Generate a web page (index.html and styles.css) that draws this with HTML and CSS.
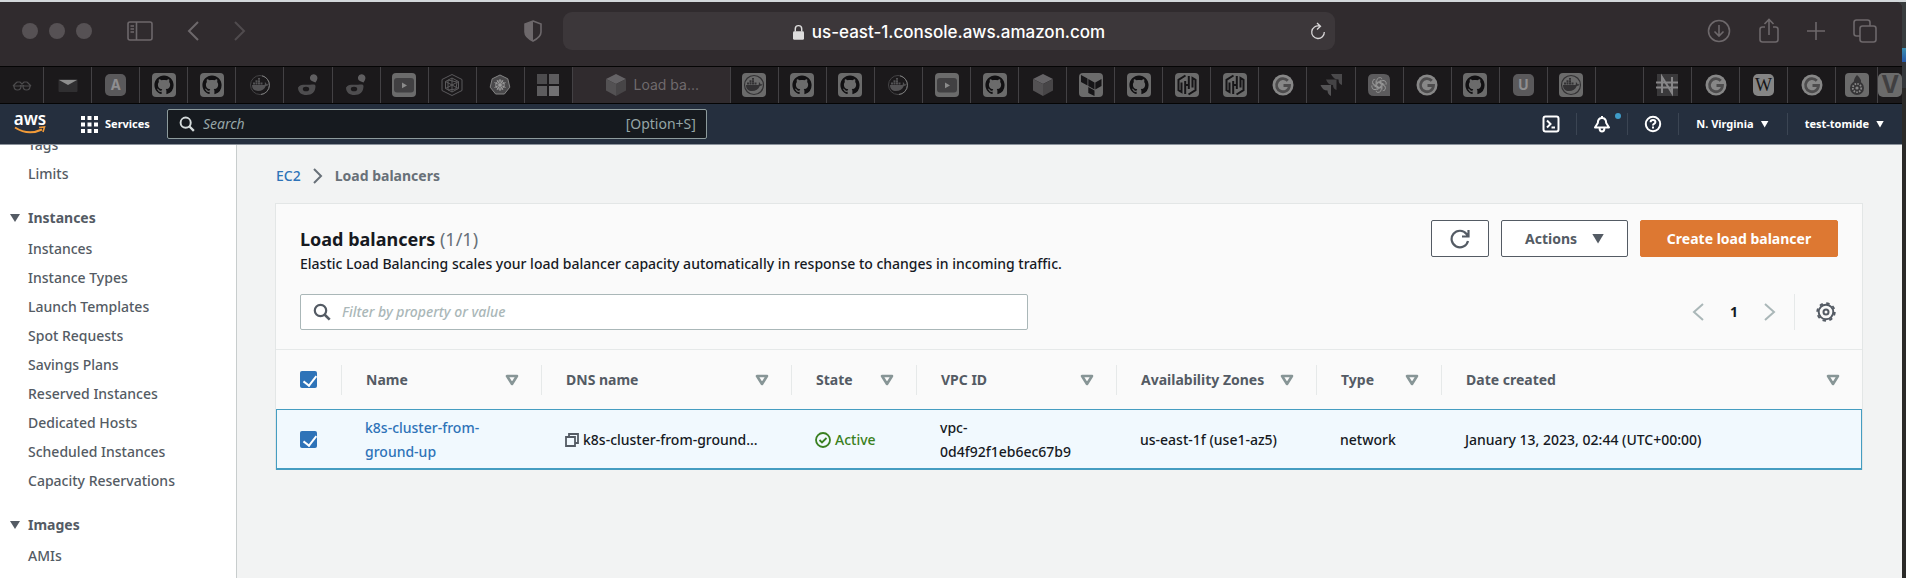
FILE: index.html
```html
<!DOCTYPE html>
<html lang="en">
<head>
<meta charset="utf-8">
<title>Load balancers | EC2</title>
<link rel="stylesheet" href="styles.css">
</head>
<body>
<svg class="sprite" aria-hidden="true">
  <symbol id="github" viewBox="0 0 24 24"><rect width="24" height="24" rx="4" fill="#6b6b6b"/><path transform="translate(2.4 2.4) scale(1.2)" fill="#111012" d="M8 0C3.58 0 0 3.58 0 8c0 3.54 2.29 6.53 5.47 7.59.4.07.55-.17.55-.38 0-.19-.01-.82-.01-1.49-2.01.37-2.53-.49-2.69-.94-.09-.23-.48-.94-.82-1.13-.28-.15-.68-.52-.01-.53.63-.01 1.08.58 1.23.82.72 1.21 1.87.87 2.33.66.07-.52.28-.87.51-1.07-1.78-.2-3.64-.89-3.64-3.95 0-.87.31-1.59.82-2.15-.08-.2-.36-1.02.08-2.12 0 0 .67-.21 2.2.82.64-.18 1.32-.27 2-.27.68 0 1.36.09 2 .27 1.53-1.04 2.2-.82 2.2-.82.44 1.1.16 1.92.08 2.12.51.56.82 1.27.82 2.15 0 3.07-1.87 3.75-3.65 3.95.29.25.54.73.54 1.48 0 1.07-.01 1.93-.01 2.2 0 .21.15.46.55.38A8.01 8.01 0 0 0 16 8c0-4.42-3.58-8-8-8z"/></symbol>
  <symbol id="whale" viewBox="0 0 24 24"><path d="M4 12h12.500c.6-1 .4-2 .3-2.800 1 .4 1.600 1.200 1.700 2 .7-.1 1.500 0 2 .4-.5 1-1.500 1.400-2.700 1.400C16.400 16.500 13.800 18 10 18c-3.500 0-6-1.700-6-6zM5 9.500h2v2H5zM7.500 9.500h2v2h-2zM10 9.500h2v2h-2zM12.500 9.500h2v2h-2zM7.500 7.200h2v2h-2zM10 7.200h2v2h-2zM10 5h2v1.800h-2z"/></symbol>
  <symbol id="docker" viewBox="0 0 24 24"><circle cx="12" cy="12" r="9.500" fill="none" stroke="#444345" stroke-width="1"/><path d="M14 2.800a9.500 9.500 0 0 1-1 18.700" fill="none" stroke="#7b7b7b" stroke-width="1"/><use href="#whale" fill="#535254"/></symbol>
  <symbol id="dockerbox" viewBox="0 0 24 24"><rect width="24" height="24" rx="4" fill="#6b6b6b"/><circle cx="12" cy="12" r="9.500" fill="none" stroke="#333234" stroke-width="1.200"/><use href="#whale" fill="#333234"/></symbol>
  <symbol id="dtail" viewBox="0 0 24 24"><path d="M2 14.500c1-.2 1-2.500 5-2.700 3-.2 5 .2 7 0 3-.3 5-1 5.500 1.200C19.500 19 16 22 10.500 22 5.500 22 2 19.500 2 14.500z" fill="#4e4d4f"/><ellipse cx="10" cy="16" rx="3.200" ry="2.300" fill="#1b191b"/><path d="M14 4q1-3.500 5-2.500 3.500 1.500 2 5.500l-1.500 2.500-2.500-1q-3.500-1-3-4.500z" fill="#605f61"/></symbol>
  <symbol id="youtube" viewBox="0 0 24 24"><rect width="24" height="24" rx="4" fill="#6b6b6b"/><rect x="2" y="5" width="20" height="14.500" rx="3" fill="#414042"/><path d="M10 9.500l5 2.900-5 2.900z" fill="#8b8b8b"/></symbol>
  <symbol id="cube" viewBox="0 0 24 24"><path d="M12 1l10 5-10 5L2 6z" fill="#656366"/><path d="M2 6l10 5v12L2 17.500z" fill="#535153"/><path d="M22 6l-10 5v12l10-5.500z" fill="#474547"/></symbol>
  <symbol id="hashi" viewBox="0 0 24 24"><rect width="24" height="24" rx="4" fill="#6b6b6b"/><path d="M10.500 2.500L3.500 6.800v10.400l3 1.800V9.500M13.500 21.500l7-4.300V6.800l-3-1.800v9.500M10.200 8v13M13.800 3v13M10.200 12h3.600" fill="none" stroke="#161517" stroke-width="2"/></symbol>
  <symbol id="google" viewBox="0 0 24 24"><circle cx="12" cy="12" r="10.500" fill="#878787"/><path d="M16.800 7.800A6.500 6.500 0 1 0 18.500 12.500H12.500" fill="none" stroke="#4d4c4d" stroke-width="2.800"/></symbol>
  <symbol id="terraform" viewBox="0 0 24 24"><rect width="24" height="24" rx="4" fill="#6b6b6b"/><path d="M2 2l6.500 3.500v7L2 9zM9.300 6l6.200 3.500v7L9.300 13zM16.300 9.500L22.500 6v7l-6.200 3.500zM9.300 14l6.200 3.500v5.500L9.300 20z" fill="#161517"/></symbol>
  <symbol id="sort" viewBox="0 0 14 12"><path d="M2 2h10l-5 8z" fill="none" stroke="#879596" stroke-width="2.600" stroke-linejoin="round"/></symbol>
  <symbol id="search" viewBox="0 0 18 18"><circle cx="7.500" cy="7.500" r="5.700" fill="none" stroke="currentColor" stroke-width="2.200"/><path d="M11.500 11.500l5.200 5.200" stroke="currentColor" stroke-width="2.600"/></symbol>
</svg>

<div class="desktop">
<div class="window">
  <header class="toolbar">
    <div class="tools">
      <span class="lights"><i></i><i></i><i></i></span>
      <button class="tool tool-side" aria-label="Sidebar"><svg width="26" height="20" viewBox="0 0 26 20" fill="none" stroke="currentColor" stroke-width="1.600"><rect x="1" y="1" width="24" height="18" rx="2"/><path d="M9.500 1v18M3.500 5h3.500M3.500 8h3.500M3.500 11h3.500"/></svg></button>
      <button class="tool tool-back" aria-label="Back"><svg width="12" height="20" viewBox="0 0 12 20" fill="none" stroke="currentColor" stroke-width="2"><path d="M11 1L2 10l9 9"/></svg></button>
      <button class="tool dim" aria-label="Forward"><svg width="12" height="20" viewBox="0 0 12 20" fill="none" stroke="currentColor" stroke-width="2"><path d="M1 1l9 9-9 9"/></svg></button>
      <button class="tool tool-shield" aria-label="Privacy report"><svg width="20" height="22" viewBox="0 0 20 22"><path d="M10 1l8 3v8c0 4-3 6.500-8 9-5-2.500-8-5-8-9V4z" fill="none" stroke="currentColor" stroke-width="1.600"/><path d="M10 1L2 4v8c0 4 3 6.500 8 9z" fill="currentColor"/></svg></button>
    </div>
    <div class="address">
      <svg width="11" height="17" viewBox="0 0 12 18"><rect y="7.500" width="12" height="9.500" rx="1.500" fill="#dedddd"/><path d="M2.500 8V5a3.500 3.500 0 0 1 7 0v3" fill="none" stroke="#dedddd" stroke-width="1.600"/></svg>
      <span>us-east-1.console.aws.amazon.com</span>
      <button class="reload" aria-label="Reload"><svg width="16" height="18" viewBox="0 0 16 18" fill="none" stroke="currentColor" stroke-width="1.300"><path d="M9.500 4.100A6.300 6.300 0 1 0 14.300 10M7 1l3.500 3.300L7 7.500"/></svg></button>
    </div>
    <div class="tools tools-end">
      <button class="tool" aria-label="Downloads"><svg width="24" height="24" viewBox="0 0 24 24" fill="none" stroke="currentColor" stroke-width="1.600"><circle cx="12" cy="12" r="10.500"/><path d="M12 6v11M7.500 12.500L12 17l4.500-4.500"/></svg></button>
      <button class="tool" aria-label="Share"><svg width="20" height="26" viewBox="0 0 20 26" fill="none" stroke="currentColor" stroke-width="1.600"><path d="M6 9H3.500Q1 9 1 11.500v10Q1 24 3.500 24h13q2.500 0 2.500-2.500v-10Q19 9 16.500 9H14M10 17V1.500M5.500 6L10 1.500 14.500 6"/></svg></button>
      <button class="tool" aria-label="New tab"><svg width="18" height="18" viewBox="0 0 18 18" stroke="currentColor" stroke-width="1.600"><path d="M9 0v18M0 9h18"/></svg></button>
      <button class="tool" aria-label="Tab overview"><svg width="24" height="24" viewBox="0 0 24 24" fill="none" stroke="currentColor" stroke-width="1.600"><rect x="7" y="7" width="16" height="16" rx="2.500"/><path d="M7 17H3.500Q1 17 1 14.500v-11Q1 1 3.500 1h11Q17 1 17 3.500V7"/></svg></button>
    </div>
  </header>

  <nav class="tabs" aria-label="Tabs">
    <a href="#" class="tab tab-first" aria-label="Tab"><svg viewBox="0 0 24 24" fill="none" stroke="#4c4b4d" stroke-width="1.200"><path d="M7 9h3l4 4M17 9h-3l-4 4M3 13h18M7 9l-4 4M17 9l4 4M4 13q0 4 3.500 4t3.500-4M13 13q0 4 3.500 4t3.500-4"/></svg></a>
    <a href="#" class="tab" aria-label="Mail"><svg viewBox="0 0 24 24"><rect x="2.500" y="6" width="19" height="13" rx="1" fill="#302f31"/><path d="M3 7h18l-9 5z" fill="#8e8e8e"/></svg></a>
    <a href="#" class="tab"><span class="letter">A</span></a>
    <a href="#" class="tab" aria-label="GitHub"><svg><use href="#github"/></svg></a>
    <a href="#" class="tab" aria-label="GitHub"><svg><use href="#github"/></svg></a>
    <a href="#" class="tab" aria-label="Docker"><svg><use href="#docker"/></svg></a>
    <a href="#" class="tab" aria-label="Tab"><svg><use href="#dtail"/></svg></a>
    <a href="#" class="tab" aria-label="Tab"><svg><use href="#dtail"/></svg></a>
    <a href="#" class="tab" aria-label="YouTube"><svg><use href="#youtube"/></svg></a>
    <a href="#" class="tab" aria-label="Tab"><svg viewBox="0 0 24 24" fill="none" stroke="#5b5a5c" stroke-width="1"><path d="M12 1.500l10 5v11l-10 5-10-5v-11zM12 5l6.500 3.500v7L12 19l-6.500-3.500v-7zM12 5v14M5.500 8.500l13 7M18.500 8.500l-13 7M8 7l9 2-1 7-8 1z"/></svg></a>
    <a href="#" class="tab" aria-label="Kubernetes"><svg viewBox="0 0 24 24"><path d="M12 2l7.800 3.800 2 8.400-5.400 6.800H7.600l-5.400-6.800 2-8.400z" fill="#4a494b" stroke="#858585" stroke-width="1"/><g fill="none" stroke="#a0a0a0" stroke-width=".9"><circle cx="12" cy="12" r="4.200"/><path d="M12 6v12M6.500 9.500l11 5M6.500 14.500l11-5M9 7l6 10M15 7l-6 10"/></g></svg></a>
    <a href="#" class="tab" aria-label="Microsoft"><svg viewBox="0 0 24 24"><path d="M1 1h10v10H1z" fill="#4d4c4e"/><path d="M13 1h10v10H13zM1 13h10v10H1z" fill="#5d5c5e"/><path d="M13 13h10v10H13z" fill="#727173"/></svg></a>
    <a href="#" class="tab tab-active" aria-current="page"><svg><use href="#cube"/></svg><span>Load ba...</span></a>
    <a href="#" class="tab" aria-label="Docker"><svg><use href="#dockerbox"/></svg></a>
    <a href="#" class="tab" aria-label="GitHub"><svg><use href="#github"/></svg></a>
    <a href="#" class="tab" aria-label="GitHub"><svg><use href="#github"/></svg></a>
    <a href="#" class="tab" aria-label="Docker"><svg><use href="#docker"/></svg></a>
    <a href="#" class="tab" aria-label="YouTube"><svg><use href="#youtube"/></svg></a>
    <a href="#" class="tab" aria-label="GitHub"><svg><use href="#github"/></svg></a>
    <a href="#" class="tab" aria-label="AWS"><svg><use href="#cube"/></svg></a>
    <a href="#" class="tab" aria-label="Terraform"><svg><use href="#terraform"/></svg></a>
    <a href="#" class="tab" aria-label="GitHub"><svg><use href="#github"/></svg></a>
    <a href="#" class="tab" aria-label="HashiCorp"><svg><use href="#hashi"/></svg></a>
    <a href="#" class="tab" aria-label="HashiCorp"><svg><use href="#hashi"/></svg></a>
    <a href="#" class="tab" aria-label="Google"><svg><use href="#google"/></svg></a>
    <a href="#" class="tab" aria-label="Jira"><svg viewBox="0 0 24 24"><path d="M12 1h11v11q-3.500-1-3.500-5.500-5 0-7.500-5.500z" fill="#4a494b"/><path d="M7 6.500h10.500v10.500q-3.500-1-3.500-5-5 0-7-5.500z" fill="#444345"/><path d="M1.500 12H12v11q-3.500-2-3.500-5.500-5 0-7-5.500z" fill="#555456"/></svg></a>
    <a href="#" class="tab" aria-label="OpenAI"><svg viewBox="0 0 24 24"><path d="M6 1h11q6 0 6 6v16H7q-6 0-6-6V6q0-5 5-5z" fill="#5c5b5d"/><g fill="none" stroke="#9a9a9a" stroke-width=".9"><path id="petal" d="M9.800 13.200V7.600a3 3 0 0 1 5.400-1.800M9.800 9.800l4.600-2.600"/><use href="#petal" transform="rotate(60 12 12)"/><use href="#petal" transform="rotate(120 12 12)"/><use href="#petal" transform="rotate(180 12 12)"/><use href="#petal" transform="rotate(240 12 12)"/><use href="#petal" transform="rotate(300 12 12)"/></g></svg></a>
    <a href="#" class="tab" aria-label="Google"><svg><use href="#google"/></svg></a>
    <a href="#" class="tab" aria-label="GitHub"><svg><use href="#github"/></svg></a>
    <a href="#" class="tab"><span class="letter">U</span></a>
    <a href="#" class="tab" aria-label="Docker"><svg><use href="#dockerbox"/></svg></a>
    <a href="#" class="tab" aria-label="Empty tab"></a>
    <a href="#" class="tab" aria-label="Tab"><svg viewBox="0 0 24 24"><path d="M2 1h21v22H2z" fill="#3a393b"/><path d="M7 20V4l10 16V4M1 9.500h22M1 14.500h22" fill="none" stroke="#878688" stroke-width="2"/></svg></a>
    <a href="#" class="tab" aria-label="Google"><svg><use href="#google"/></svg></a>
    <a href="#" class="tab"><span class="letter letter-wiki">W</span></a>
    <a href="#" class="tab" aria-label="Google"><svg><use href="#google"/></svg></a>
    <a href="#" class="tab tab-narrow" aria-label="Tab"><svg viewBox="0 0 24 24"><rect width="24" height="24" rx="4" fill="#6b6b6b"/><circle cx="12" cy="15" r="7" fill="#353436"/><path d="M12 2q6 5 3 9H9q-1-5 3-9z" fill="#353436"/><circle cx="12" cy="15" r="4.200" fill="none" stroke="#858585" stroke-width="1.800" stroke-dasharray="1.600 1.200"/><circle cx="12" cy="15" r="1.600" fill="#858585"/></svg></a>
    <a href="#" class="tab tab-last"><span class="letter letter-v">V</span></a>
  </nav>

  <header class="awsnav">
    <a href="#" class="logo" aria-label="AWS home"><svg width="32" height="34" viewBox="0 0 32 34"><text x="16" y="18" text-anchor="middle" class="logo-text">aws</text><path d="M1 20.500q13 8.500 27 2" fill="none" stroke="#f19a38" stroke-width="2"/><path d="M25 20.500l5.500-.5-1.500 5" fill="none" stroke="#f19a38" stroke-width="1.600"/></svg></a>
    <button class="services"><svg width="17" height="17" viewBox="0 0 17 17" fill="#fff"><path d="M0 0h4v4H0zM6.500 0h4v4h-4zM13 0h4v4h-4zM0 6.500h4v4H0zM6.500 6.500h4v4h-4zM13 6.500h4v4h-4zM0 13h4v4H0zM6.500 13h4v4h-4zM13 13h4v4h-4z"/></svg>Services</button>
    <label class="navsearch"><svg width="16" height="16"><use href="#search"/></svg><input type="search" placeholder="Search" aria-label="Search"><span>[Option+S]</span></label>
    <div class="navend">
      <button class="navicon" aria-label="CloudShell"><svg width="18" height="18" viewBox="0 0 18 18" fill="none" stroke="#fff" stroke-width="2"><rect x="1.500" y="1.500" width="15" height="15" rx="2"/><path d="M5 5.500L8.500 9 5 12.500M9.500 12.500H13"/></svg></button>
      <button class="navicon" aria-label="Notifications"><svg width="18" height="18" viewBox="0 0 18 18" fill="none" stroke="#fff" stroke-width="2" stroke-linejoin="round"><path d="M9 3q4 0 4.200 5L16 12.500H2L4.800 8Q5 3 9 3zM9 1v2M6.500 13.500q.5 3 2.500 3t2.500-3"/></svg><i class="dot"></i></button>
      <button class="navicon" aria-label="Help"><svg width="18" height="18" viewBox="0 0 18 18" fill="none" stroke="#fff" stroke-width="2"><circle cx="9" cy="9" r="7.200"/><path d="M6.600 7.200q0-2.200 2.400-2.200t2.400 2q0 1.200-1.400 1.900-1 .6-1 1.600M9 11.600v1.800"/></svg></button>
      <button class="navmenu">N. Virginia<i class="caret"></i></button>
      <button class="navmenu">test-tomide<i class="caret"></i></button>
    </div>
  </header>

  <div class="page">
    <nav class="sidebar" aria-label="EC2">
      <a href="#">Tags</a>
      <a href="#">Limits</a>
      <h2><i class="caret"></i>Instances</h2>
      <a href="#">Instances</a>
      <a href="#">Instance Types</a>
      <a href="#">Launch Templates</a>
      <a href="#">Spot Requests</a>
      <a href="#">Savings Plans</a>
      <a href="#">Reserved Instances</a>
      <a href="#">Dedicated Hosts</a>
      <a href="#">Scheduled Instances</a>
      <a href="#">Capacity Reservations</a>
      <h2><i class="caret"></i>Images</h2>
      <a href="#">AMIs</a>
      <a href="#">AMI Catalog</a>
    </nav>
    <main class="main">
      <nav class="crumbs" aria-label="Breadcrumb"><a href="#">EC2</a><svg width="10" height="16" viewBox="0 0 10 16" fill="none" stroke="#687078" stroke-width="2"><path d="M1 1l7 7-7 7"/></svg><span>Load balancers</span></nav>
      <section class="card">
        <div class="card-head">
          <div class="heading">
            <h1>Load balancers <span>(1/1)</span></h1>
            <p>Elastic Load Balancing scales your load balancer capacity automatically in response to changes in incoming traffic.</p>
          </div>
          <div class="actions">
            <button class="btn btn-refresh" aria-label="Refresh"><svg width="20" height="20" viewBox="0 0 20 20" fill="none" stroke="currentColor" stroke-width="2.200"><path d="M18 12a8.300 8.300 0 1 1-1.500-7l1.500 2M18.500 1v6.500H12"/></svg></button>
            <button class="btn btn-menu">Actions<i class="caret"></i></button>
            <button class="btn btn-primary">Create load balancer</button>
          </div>
        </div>
        <div class="filters">
          <label class="filter"><svg width="18" height="18"><use href="#search"/></svg><input type="text" placeholder="Filter by property or value" aria-label="Filter by property or value"></label>
          <div class="pager">
            <button aria-label="Previous page"><svg width="12" height="18" viewBox="0 0 12 18" fill="none" stroke="currentColor" stroke-width="2"><path d="M11 1L2 9l9 8"/></svg></button>
            <button class="current">1</button>
            <button aria-label="Next page"><svg width="12" height="18" viewBox="0 0 12 18" fill="none" stroke="currentColor" stroke-width="2"><path d="M1 1l9 8-9 8"/></svg></button>
          </div>
          <button class="gear" aria-label="Preferences"><svg width="20" height="20" viewBox="0 0 20 20" fill="none" stroke="currentColor" stroke-width="2"><circle cx="10" cy="10" r="7.300"/><circle cx="10" cy="10" r="2.500"/><circle cx="10" cy="10" r="8.800" stroke-width="1.800" stroke-dasharray="3.400 3.510"/></svg></button>
        </div>
        <table>
          <colgroup><col class="c-check"><col class="c-mid"><col class="c-wide"><col class="c-small"><col class="c-mid"><col class="c-mid"><col class="c-small"><col></colgroup>
          <thead>
            <tr>
              <th><input type="checkbox" checked aria-label="Select all"></th>
              <th><div>Name<svg><use href="#sort"/></svg></div></th>
              <th><div>DNS name<svg><use href="#sort"/></svg></div></th>
              <th><div>State<svg><use href="#sort"/></svg></div></th>
              <th><div>VPC ID<svg><use href="#sort"/></svg></div></th>
              <th><div>Availability Zones<svg><use href="#sort"/></svg></div></th>
              <th><div>Type<svg><use href="#sort"/></svg></div></th>
              <th><div>Date created<svg><use href="#sort"/></svg></div></th>
            </tr>
          </thead>
          <tbody>
            <tr>
              <td><input type="checkbox" checked aria-label="Select k8s-cluster-from-ground-up"></td>
              <td><a href="#">k8s-cluster-from-<br>ground-up</a></td>
              <td><div class="dns"><svg width="14" height="14" viewBox="0 0 14 14" fill="none" stroke="#545b64" stroke-width="1.800"><path d="M1 4h9v9H1zM4 4V1h9v9h-3"/></svg>k8s-cluster-from-ground...</div></td>
              <td><span class="active"><svg width="16" height="16" viewBox="0 0 16 16" fill="none" stroke="currentColor" stroke-width="1.800"><circle cx="8" cy="8" r="7"/><path d="M4.500 8l2.500 2.500 4.500-4.500"/></svg>Active</span></td>
              <td>vpc-<br>0d4f92f1eb6ec67b9</td>
              <td>us-east-1f (use1-az5)</td>
              <td>network</td>
              <td>January 13, 2023, 02:44 (UTC+00:00)</td>
            </tr>
          </tbody>
        </table>
      </section>
    </main>
  </div>
</div>
</div>
</body>
</html>
```

FILE: styles.css
```css
* { box-sizing: border-box; }
body { margin: 0; font: 500 14px/24px "Noto Sans", "Open Sans", sans-serif; color: #16191f; overflow: hidden; }
a { color: inherit; text-decoration: none; }
button { font: inherit; color: inherit; background: none; border: 0; padding: 0; display: flex; align-items: center; justify-content: center; }
input { font: inherit; margin: 0; }
svg { flex: none; display: block; }
.sprite { position: absolute; width: 0; height: 0; }

.desktop { height: 100vh; padding: 2px 4px 0 0; background: linear-gradient(#d3d8da 2px, #393d3e 2px, #393d3e 48px, #3b8fb0 48px, #2858a8 62px, #34373a 62px, #34373a 88px, #2b2a28 88px); }
.window { height: 100%; display: flex; flex-direction: column; overflow: hidden; border-top-right-radius: 6px; background: #302b2e; }

.toolbar { flex: none; height: 64px; padding-top: 10px; display: grid; grid-template-columns: 563fr 772fr 567fr; align-items: start; background: #302b2e; color: #6d686b; }
.tools { display: flex; align-items: center; height: 38px; padding-left: 22px; }
.lights { display: flex; gap: 11px; margin-right: 35px; }
.lights i { width: 16px; height: 16px; border-radius: 50%; background: #565154; }
.tool-side { margin-right: 34px; }
.tool-back { margin-right: 35px; }
.dim { color: #504b4e; }
.tool-shield { margin-left: auto; margin-right: 20px; }
.tools-end { justify-content: flex-end; gap: 28px; padding: 0 25px 0 0; }
.address { height: 38px; border-radius: 9px; background: #3c373a; display: flex; align-items: center; justify-content: center; gap: 8px; padding: 2px 10px 0; color: #fff; font: 500 17px/22px Inter, sans-serif; position: relative; }
.reload { position: absolute; right: 9px; top: 10px; color: #d8d6d7; }

.tabs { flex: none; display: flex; height: 38px; background: #1b191b; border-top: 1px solid #050505; border-bottom: 1px solid #050505; }
.tab { flex: 48 0 0; min-width: 0; display: flex; align-items: center; justify-content: center; border-right: 1px solid #434144; overflow: hidden; }
.tab svg { width: 24px; height: 24px; }
.tab-first { flex-grow: 44; }
.tab-active { flex-grow: 160; gap: 6px; background: #302b2e; color: #6f6a6d; font: 14px/20px Inter, sans-serif; }
.tab-narrow { flex-grow: 42; }
.tab-last { flex-grow: 24; border-right: 0; }
.letter { flex: none; width: 21px; height: 22px; border-radius: 5px; background: #5a595b; color: #8f8e90; font: 700 14px/22px Inter, sans-serif; text-align: center; }
.letter-wiki { background: #858585; color: #161517; font: 400 18px/22px "Liberation Serif", serif; }
.letter-v { width: 24px; height: 24px; background: #6b6b6b; color: #403f41; font-size: 24px; line-height: 24px; }

.awsnav { flex: none; height: 41px; display: flex; align-items: center; background: #252f3e; border-bottom: 1px solid #8b929b; color: #fff; font-size: 11px; font-weight: 700; }
.logo { padding: 0 17px 0 14px; }
.logo-text { font: 600 17px "Noto Sans", sans-serif; fill: #fff; }
.services { gap: 7px; margin: 0 17px 0 18px; }
.navsearch { width: 540px; height: 30px; display: flex; align-items: center; gap: 8px; padding: 0 10px 0 11px; background: #161a1f; border: 1px solid #8d9b9c; border-radius: 2px; color: #d5dbdb; font-weight: 400; font-size: 14px; }
.navsearch input { flex: 1; min-width: 0; border: 0; background: none; color: #fff; outline: 0; padding: 0; }
.navsearch input::placeholder { color: #95a5a6; font-style: italic; opacity: 1; }
.navsearch span { color: #95a5a6; }
.navend { margin-left: auto; display: flex; align-items: center; }
.navend button { height: 22px; border-left: 1px solid #3b4553; }
.navend button:first-child { border-left: 0; }
.navicon { width: 51px; position: relative; }
.dot { position: absolute; right: 6px; top: 0; width: 6px; height: 6px; border-radius: 50%; background: #3f9cc8; }
.navmenu { gap: 7px; padding: 0 18px 0 17px; }
.caret { flex: none; width: 10px; height: 8px; background: currentColor; clip-path: polygon(0 0, 100% 0, 50% 100%); }
.navmenu .caret { width: 8px; height: 7px; }

.page { flex: 1; min-height: 0; display: flex; background: #f2f3f3; }
.sidebar { flex: none; width: 237px; background: #fff; border-right: 1px solid #c8cdcd; padding-left: 28px; color: #545b64; overflow: hidden; display: flex; flex-direction: column; }
.sidebar a { flex: none; height: 29px; line-height: 29px; }
.sidebar a:first-child { margin-top: -15px; }
.sidebar h2 { flex: none; display: flex; align-items: center; gap: 8px; margin: 16px 0 2px -18px; font-size: 14px; line-height: 28px; }
.main { flex: 1; min-width: 0; padding: 19px 39px 0 38px; }
.crumbs { display: flex; align-items: center; gap: 12px; height: 24px; padding-left: 1px; color: #687078; font-weight: 700; }
.crumbs a { color: #2e73b8; font-weight: 500; }

.card { margin-top: 15px; background: #fafafa; border: 1px solid #e3e6e6; border-bottom: 0; }
.card-head { display: flex; justify-content: space-between; padding: 16px 24px 0 24px; }
h1 { margin: 6px 0 0; font-size: 18px; line-height: 26px; }
h1 span { color: #687078; font-weight: 400; }
p { margin: 0; }
.actions { display: flex; gap: 12px; }
.btn { height: 37px; border: 1px solid #545b64; border-radius: 2px; background: #fff; color: #545b64; font-weight: 700; }
.btn-refresh { width: 58px; }
.btn-menu { width: 127px; gap: 15px; }
.btn .caret { width: 12px; height: 10px; }
.btn-primary { width: 198px; background: #dd7832; border-color: #dd7832; color: #fff; }
.filters { display: flex; align-items: center; padding: 18px 24px 19px 24px; border-bottom: 1px solid #e6e9e9; }
.filter { flex: 0 1 728px; height: 36px; display: flex; align-items: center; gap: 11px; padding: 0 12px; background: #fff; border: 1px solid #aab7b8; border-radius: 2px; color: #545b64; }
.filter input { flex: 1; border: 0; outline: 0; padding: 0; background: none; }
.filter input::placeholder { color: #aab7b8; font-style: italic; opacity: 1; }
.pager { margin-left: auto; display: flex; align-items: center; gap: 21px; color: #aab7b8; }
.pager .current { width: 18px; color: #16191f; font-weight: 700; }
.gear { height: 36px; margin-left: 18px; padding: 0 2px 0 21px; border-left: 1px solid #e6e9e9; color: #545b64; }

table { width: 100%; table-layout: fixed; border-collapse: separate; border-spacing: 0; }
.c-check { width: 65px; }
.c-mid { width: 200px; }
.c-wide { width: 250px; }
.c-small { width: 125px; }
th { height: 59px; padding: 0; text-align: left; color: #545b64; }
th div { display: flex; align-items: center; justify-content: space-between; height: 30px; padding: 0 22px 0 24px; border-left: 1px solid #e6e9e9; white-space: nowrap; }
th svg { width: 14px; height: 12px; }
td { height: 61px; padding: 2px 0 0 24px; background: #f1f9fe; border-top: 1px solid #459dc1; border-bottom: 2px solid #459dc1; white-space: nowrap; }
th:first-child, td:first-child { padding: 0 0 0 24px; }
td:first-child { border-left: 1px solid #459dc1; padding-left: 23px; }
td:last-child { border-right: 1px solid #459dc1; }
td a { color: #2e73b8; }
input[type="checkbox"] { appearance: none; display: block; width: 17px; height: 17px; border-radius: 2px; background: #2e73b8; position: relative; }
input[type="checkbox"]::after { content: ""; position: absolute; left: 6px; top: 2px; width: 6px; height: 11px; border: solid #fff; border-width: 0 2px 2px 0; transform: rotate(38deg); }
.dns, .active { display: flex; align-items: center; gap: 4px; }
.active { color: #3a8020; }
```
